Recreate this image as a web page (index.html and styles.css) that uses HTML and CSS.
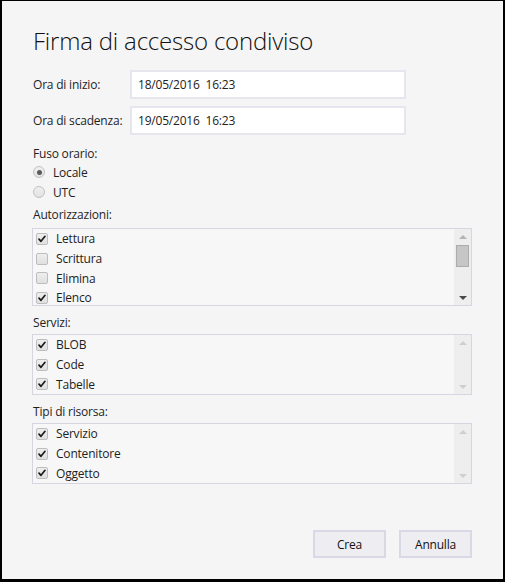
FILE: index.html
```html
<!DOCTYPE html>
<html lang="it">
<head>
<meta charset="utf-8">
<title>Firma di accesso condiviso</title>
<link rel="stylesheet" href="styles.css">
</head>
<body>
<div class="dialog">
  <h1 class="title">Firma di accesso condiviso</h1>

  <div class="field first">
    <span class="field-label">Ora di inizio:</span>
    <div class="input">18/05/2016  16:23</div>
  </div>
  <div class="field">
    <span class="field-label">Ora di scadenza:</span>
    <div class="input">19/05/2016  16:23</div>
  </div>

  <div class="section-label fuso">Fuso orario:</div>
  <div class="radio-row"><span class="radio checked"></span><span>Locale</span></div>
  <div class="radio-row"><span class="radio"></span><span>UTC</span></div>

  <div class="section-label auth">Autorizzazioni:</div>
  <div class="listbox tall">
    <div class="items">
      <div class="item"><span class="cb checked"><svg viewBox="0 0 12 12"><path d="M2.4 6.2 L4.8 8.8 L9.6 2.8"/></svg></span>Lettura</div>
      <div class="item"><span class="cb"></span>Scrittura</div>
      <div class="item"><span class="cb"></span>Elimina</div>
      <div class="item"><span class="cb checked"><svg viewBox="0 0 12 12"><path d="M2.4 6.2 L4.8 8.8 L9.6 2.8"/></svg></span>Elenco</div>
    </div>
    <div class="scrollbar">
      <span class="arrow up dim"></span>
      <span class="thumb"></span>
      <span class="arrow down dark"></span>
    </div>
  </div>

  <div class="section-label">Servizi:</div>
  <div class="listbox">
    <div class="items">
      <div class="item"><span class="cb checked"><svg viewBox="0 0 12 12"><path d="M2.4 6.2 L4.8 8.8 L9.6 2.8"/></svg></span>BLOB</div>
      <div class="item"><span class="cb checked"><svg viewBox="0 0 12 12"><path d="M2.4 6.2 L4.8 8.8 L9.6 2.8"/></svg></span>Code</div>
      <div class="item"><span class="cb checked"><svg viewBox="0 0 12 12"><path d="M2.4 6.2 L4.8 8.8 L9.6 2.8"/></svg></span>Tabelle</div>
    </div>
    <div class="scrollbar">
      <span class="arrow up faint"></span>
      <span class="spacer"></span>
      <span class="arrow down faint"></span>
    </div>
  </div>

  <div class="section-label">Tipi di risorsa:</div>
  <div class="listbox">
    <div class="items">
      <div class="item"><span class="cb checked"><svg viewBox="0 0 12 12"><path d="M2.4 6.2 L4.8 8.8 L9.6 2.8"/></svg></span>Servizio</div>
      <div class="item"><span class="cb checked"><svg viewBox="0 0 12 12"><path d="M2.4 6.2 L4.8 8.8 L9.6 2.8"/></svg></span>Contenitore</div>
      <div class="item"><span class="cb checked"><svg viewBox="0 0 12 12"><path d="M2.4 6.2 L4.8 8.8 L9.6 2.8"/></svg></span>Oggetto</div>
    </div>
    <div class="scrollbar">
      <span class="arrow up faint"></span>
      <span class="spacer"></span>
      <span class="arrow down faint"></span>
    </div>
  </div>

  <div class="buttons">
    <button class="btn">Crea</button>
    <button class="btn">Annulla</button>
  </div>
</div>
</body>
</html>
```

FILE: styles.css
```css
* { box-sizing: border-box; }

html, body {
  margin: 0;
  padding: 0;
}

body {
  width: 505px;
  height: 582px;
  background: #f5f5f5;
  border-style: solid;
  border-color: #000;
  border-width: 1px 2px 3px 2px;
  font-family: "Open Sans", "Noto Sans", sans-serif;
  font-size: 12px;
  letter-spacing: -0.2px;
  color: #1e1e1e;
  overflow: hidden;
}

.dialog {
  height: 100%;
  display: flex;
  flex-direction: column;
  padding: 0 31px 21px 30px;
}

.title {
  margin: 24px 0 0 1px;
  font-size: 24px;
  line-height: 32px;
  font-weight: 300;
  color: #111;
  letter-spacing: -0.2px;
}

.field {
  display: flex;
  align-items: center;
  height: 29px;
  margin-top: 7px;
  padding-left: 1px;
}
.field.first { margin-top: 13px; }

.field-label {
  width: 97px;
  flex: none;
}

.input {
  width: 276px;
  height: 29px;
  background: #fff;
  border: 2px solid #e6e6ee;
  padding-left: 6px;
  display: flex;
  align-items: center;
  color: #222;
  white-space: pre;
}

.section-label {
  line-height: 16px;
  margin-top: 9px;
  padding-left: 1px;
}
.section-label.fuso { margin-top: 11px; }
.section-label.auth { margin-top: 5px; }

.radio-row {
  display: flex;
  align-items: center;
  height: 20px;
  gap: 8px;
  padding-left: 1px;
}

.radio {
  width: 12px;
  height: 12px;
  border-radius: 50%;
  border: 1px solid #c2c2c2;
  background: linear-gradient(#efefef, #e2e2e2);
  display: flex;
  align-items: center;
  justify-content: center;
  flex: none;
}
.radio.checked::after {
  content: "";
  width: 5px;
  height: 5px;
  border-radius: 50%;
  background: #5a5a5a;
}

.listbox {
  display: flex;
  height: 61px;
  margin-top: 3px;
  border: 1px solid #d6d6e2;
  background: #f7f7f7;
}
.listbox.tall {
  height: 78px;
  margin-top: 5px;
}

.items {
  flex: 1;
  overflow: hidden;
  padding-left: 3px;
}

.item {
  display: flex;
  align-items: center;
  height: 19.7px;
  gap: 8px;
  color: #1e1e1e;
}

.cb {
  width: 12px;
  height: 12px;
  border: 1px solid #bdbdbd;
  border-radius: 2px;
  background: linear-gradient(#eeeeee, #e0e0e0);
  flex: none;
  display: flex;
}
.cb svg {
  width: 10px;
  height: 10px;
}
.cb svg path {
  fill: none;
  stroke: #1a1a1a;
  stroke-width: 2;
  stroke-linecap: round;
  stroke-linejoin: round;
}

.scrollbar {
  width: 17px;
  background: #eeeeee;
  display: flex;
  flex-direction: column;
  align-items: center;
  padding: 6px 0 5px;
}

.spacer { flex: 1; }

.arrow {
  width: 0;
  height: 0;
  border-left: 4px solid transparent;
  border-right: 4px solid transparent;
}
.arrow.up { border-bottom: 4px solid #b4b4b4; }
.arrow.down { border-top: 4px solid #b4b4b4; }
.arrow.up.faint { border-bottom-color: #cfcfcf; }
.arrow.down.faint { border-top-color: #cfcfcf; }
.arrow.down.dark { border-top-color: #4a4a4a; }

.thumb {
  width: 13px;
  height: 22px;
  margin-top: 6px;
  margin-bottom: auto;
  background: #c6c6c6;
  border: 1px solid #acacac;
}

.buttons {
  margin-top: auto;
  display: flex;
  justify-content: flex-end;
  gap: 13px;
}

.btn {
  width: 73px;
  height: 28px;
  background: #eeeef2;
  border: 2px solid #d9d9e5;
  font-family: "Open Sans", "Noto Sans", sans-serif;
  font-size: 12px;
  letter-spacing: -0.2px;
  color: #111;
  padding: 0;
}
```
